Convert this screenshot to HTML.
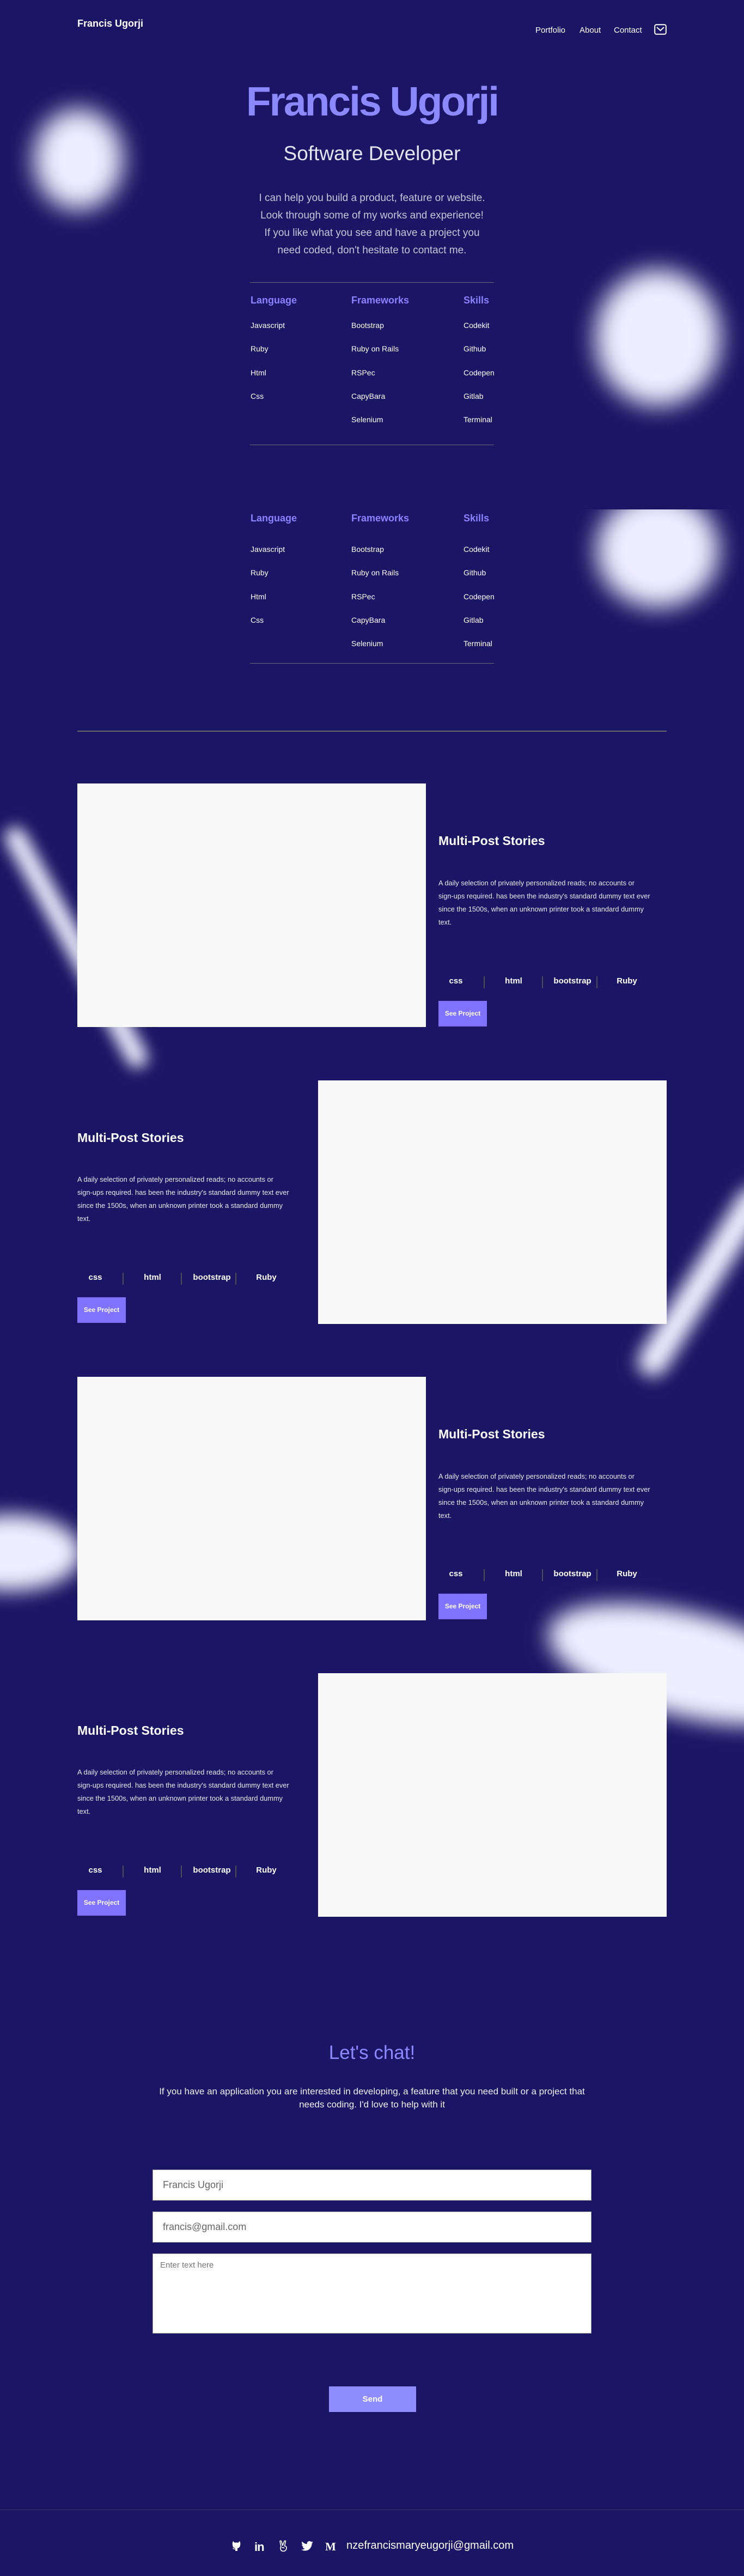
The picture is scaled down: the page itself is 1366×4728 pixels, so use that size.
<!DOCTYPE html>
<html><head><meta charset="utf-8"><style>
*{margin:0;padding:0;box-sizing:border-box}
html,body{width:1366px;height:4728px;overflow:hidden}
body{background:#1a1564;font-family:"Liberation Sans",sans-serif;color:#fff;position:relative}
.a{position:absolute}
.blur{position:absolute;background:#eeeeff;filter:blur(22px)}
.brand{left:142px;top:33px;font-size:18px;font-weight:bold}
.nav{top:47px;font-size:15px}
.title{left:0;width:1366px;top:146px;text-align:center;font-size:75px;font-weight:bold;color:#8c88ff;letter-spacing:-3px;line-height:80px}
.sub{left:0;width:1366px;top:262px;text-align:center;font-size:37px;color:#e4e4ee;line-height:40px}
.intro{left:383px;width:600px;top:348px;text-align:center;font-size:19px;line-height:32px;color:#c6c6d8;white-space:nowrap}
.hr{position:absolute;height:1px;background:#6a6670}
.ch{font-size:18px;font-weight:bold;color:#8a82ff}
.it{font-size:14px;color:#fff}
.img{position:absolute;background:#f8f8f8;width:640px;height:447px}
.pt{font-size:23px;font-weight:bold}
.pp{font-size:12.8px;line-height:24px;color:#e8e8f0;white-space:nowrap}
.tag{font-size:15px;font-weight:bold;text-align:center;width:80px}
.sep{position:absolute;width:2px;height:22px;background:#4e4c55}
.btn{position:absolute;width:89px;height:47px;background:#7f72ff;font-size:12px;font-weight:bold;text-align:center;line-height:47px}
.inp{position:absolute;left:280px;width:806px;background:#fff;border:1px solid #999;color:#666;font-size:18px}
</style></head><body>

<div class="blur" style="left:62px;top:200px;width:164px;height:185px;border-radius:50%"></div>
<div class="blur" style="left:1093px;top:495px;width:230px;height:250px;border-radius:50%"></div>
<div style="position:absolute;left:1000px;top:935px;width:366px;height:260px;overflow:hidden">
 <div class="blur" style="left:95px;top:-30px;width:225px;height:210px;border-radius:50%"></div>
</div>
<div class="blur" style="left:-110px;top:1720px;width:500px;height:38px;border-radius:20px;transform:rotate(61deg);filter:blur(14px)"></div>
<div class="blur" style="left:1090px;top:2325px;width:400px;height:55px;border-radius:28px;transform:rotate(-58deg);filter:blur(16px)"></div>
<div class="blur" style="left:-110px;top:2780px;width:260px;height:140px;border-radius:50%;filter:blur(18px)"></div>
<div class="blur" style="left:1000px;top:2960px;width:520px;height:190px;border-radius:50%;transform:rotate(14deg);filter:blur(20px)"></div>

<div class="a brand">Francis Ugorji</div>
<div class="a nav" style="left:983px">Portfolio</div>
<div class="a nav" style="left:1064px">About</div>
<div class="a nav" style="left:1127px">Contact</div>
<svg class="a" style="left:1201px;top:44px" width="23" height="20" viewBox="0 0 23 20"><rect x="1.2" y="1.2" width="20.6" height="17.6" rx="3" fill="none" stroke="#fff" stroke-width="2"/><path d="M5 6 L11.5 12 L18 6" fill="none" stroke="#fff" stroke-width="2"/></svg>

<div class="a title">Francis Ugorji</div>
<div class="a sub">Software Developer</div>
<div class="a intro">I can help you build a product, feature or website.<br>Look through some of my works and experience!<br>If you like what you see and have a project you<br>need coded, don't hesitate to contact me.</div>

<div class="hr" style="left:459px;width:448px;top:518px"></div>
<div class="a ch" style="left:460px;top:541px">Language</div>
<div class="a ch" style="left:645px;top:541px">Frameworks</div>
<div class="a ch" style="left:851px;top:541px">Skills</div>
<div class="a it" style="left:460px;top:576px;line-height:43.3px">Javascript<br>Ruby<br>Html<br>Css</div>
<div class="a it" style="left:645px;top:576px;line-height:43.3px">Bootstrap<br>Ruby on Rails<br>RSPec<br>CapyBara<br>Selenium</div>
<div class="a it" style="left:851px;top:576px;line-height:43.3px">Codekit<br>Github<br>Codepen<br>Gitlab<br>Terminal</div>
<div class="hr" style="left:459px;width:448px;top:816px"></div>

<div class="a ch" style="left:460px;top:941px">Language</div>
<div class="a ch" style="left:645px;top:941px">Frameworks</div>
<div class="a ch" style="left:851px;top:941px">Skills</div>
<div class="a it" style="left:460px;top:987px;line-height:43.3px">Javascript<br>Ruby<br>Html<br>Css</div>
<div class="a it" style="left:645px;top:987px;line-height:43.3px">Bootstrap<br>Ruby on Rails<br>RSPec<br>CapyBara<br>Selenium</div>
<div class="a it" style="left:851px;top:987px;line-height:43.3px">Codekit<br>Github<br>Codepen<br>Gitlab<br>Terminal</div>
<div class="hr" style="left:459px;width:448px;top:1217px"></div>
<div class="hr" style="left:142px;width:1082px;top:1341px;height:2px"></div>

<div class="img" style="left:142px;top:1438px"></div>
<div class="a pt" style="left:805px;top:1530px">Multi-Post Stories</div>
<div class="a pp" style="left:805px;top:1609px">A daily selection of privately personalized reads; no accounts or<br>sign-ups required. has been the industry's standard dummy text ever<br>since the 1500s, when an unknown printer took a standard dummy<br>text.</div>
<div class="a tag" style="left:797px;top:1792px">css</div><div class="sep" style="left:888px;top:1792px"></div>
<div class="a tag" style="left:903px;top:1792px">html</div><div class="sep" style="left:995px;top:1792px"></div>
<div class="a tag" style="left:1011px;top:1792px">bootstrap</div><div class="sep" style="left:1095px;top:1792px"></div>
<div class="a tag" style="left:1111px;top:1792px">Ruby</div>
<div class="btn" style="left:805px;top:1837px">See Project</div>

<div class="img" style="left:584px;top:1983px"></div>
<div class="a pt" style="left:142px;top:2075px">Multi-Post Stories</div>
<div class="a pp" style="left:142px;top:2153px">A daily selection of privately personalized reads; no accounts or<br>sign-ups required. has been the industry's standard dummy text ever<br>since the 1500s, when an unknown printer took a standard dummy<br>text.</div>
<div class="a tag" style="left:135px;top:2336px">css</div><div class="sep" style="left:225px;top:2336px"></div>
<div class="a tag" style="left:240px;top:2336px">html</div><div class="sep" style="left:332px;top:2336px"></div>
<div class="a tag" style="left:349px;top:2336px">bootstrap</div><div class="sep" style="left:432px;top:2336px"></div>
<div class="a tag" style="left:449px;top:2336px">Ruby</div>
<div class="btn" style="left:142px;top:2381px">See Project</div>

<div class="img" style="left:142px;top:2527px"></div>
<div class="a pt" style="left:805px;top:2619px">Multi-Post Stories</div>
<div class="a pp" style="left:805px;top:2698px">A daily selection of privately personalized reads; no accounts or<br>sign-ups required. has been the industry's standard dummy text ever<br>since the 1500s, when an unknown printer took a standard dummy<br>text.</div>
<div class="a tag" style="left:797px;top:2880px">css</div><div class="sep" style="left:888px;top:2880px"></div>
<div class="a tag" style="left:903px;top:2880px">html</div><div class="sep" style="left:995px;top:2880px"></div>
<div class="a tag" style="left:1011px;top:2880px">bootstrap</div><div class="sep" style="left:1095px;top:2880px"></div>
<div class="a tag" style="left:1111px;top:2880px">Ruby</div>
<div class="btn" style="left:805px;top:2925px">See Project</div>

<div class="img" style="left:584px;top:3071px"></div>
<div class="a pt" style="left:142px;top:3163px">Multi-Post Stories</div>
<div class="a pp" style="left:142px;top:3241px">A daily selection of privately personalized reads; no accounts or<br>sign-ups required. has been the industry's standard dummy text ever<br>since the 1500s, when an unknown printer took a standard dummy<br>text.</div>
<div class="a tag" style="left:135px;top:3424px">css</div><div class="sep" style="left:225px;top:3424px"></div>
<div class="a tag" style="left:240px;top:3424px">html</div><div class="sep" style="left:332px;top:3424px"></div>
<div class="a tag" style="left:349px;top:3424px">bootstrap</div><div class="sep" style="left:432px;top:3424px"></div>
<div class="a tag" style="left:449px;top:3424px">Ruby</div>
<div class="btn" style="left:142px;top:3469px">See Project</div>

<div class="a" style="left:0;width:1366px;top:3748px;text-align:center;font-size:35px;color:#8c88ff">Let's chat!</div>
<div class="a" style="left:283px;width:800px;top:3827px;text-align:center;font-size:17px;line-height:24px;color:#eeeef6">If you have an application you are interested in developing, a feature that you need built or a project that needs coding. I'd love to help with it</div>
<div class="inp" style="top:3982px;height:57px;padding:17px 0 0 18px">Francis Ugorji</div>
<div class="inp" style="top:4059px;height:57px;padding:17px 0 0 18px">francis@gmail.com</div>
<div class="inp" style="top:4136px;height:147px;padding:12px 0 0 13px;font-size:15px;color:#777">Enter text here</div>
<div class="a" style="left:604px;top:4380px;width:160px;height:47px;background:#8f8cff;text-align:center;line-height:47px;font-size:15px;font-weight:bold">Send</div>

<div class="hr" style="left:0;width:1366px;top:4606px;background:#3a3670"></div>
<svg class="a" style="left:425px;top:4663px" width="18" height="20" viewBox="0 0 18 20"><path d="M3 1 L6 4 Q9 3 12 4 L15 1 Q17 5 16 8 Q16 13 11 14 L11 19 L7 19 L7 16 Q3 17 2 13 L4 14 Q6 16 7 14 Q2 13 2 8 Q1 5 3 1Z" fill="#fff"/></svg>
<div class="a" style="left:467px;top:4662px;font-size:22px;font-weight:bold;letter-spacing:-1px">in</div>
<svg class="a" style="left:512px;top:4662px" width="17" height="22" viewBox="0 0 17 22"><path d="M4 12 L2 2 Q3 0.5 4.5 2 L7 10 L10 2 Q11.5 0.5 12.5 2 L10.5 11 Q14 11 14 14 Q14 20 8.5 20.5 Q3 20.5 3 15 Q3 12.5 4 12Z M5 14 Q8 13 10 15" fill="none" stroke="#fff" stroke-width="1.6" stroke-linejoin="round"/></svg>
<svg class="a" style="left:553px;top:4664px" width="22" height="18" viewBox="0 0 24 20"><path d="M24 2.4a10 10 0 0 1-2.8.8A5 5 0 0 0 23.3.4a10 10 0 0 1-3.1 1.2A4.9 4.9 0 0 0 11.8 6 14 14 0 0 1 1.7.9a4.9 4.9 0 0 0 1.5 6.6A4.9 4.9 0 0 1 1 6.9a4.9 4.9 0 0 0 3.9 4.8 5 5 0 0 1-2.2.1 4.9 4.9 0 0 0 4.6 3.4A9.9 9.9 0 0 1 0 17.3 14 14 0 0 0 7.5 19.5c9 0 14-7.5 14-14v-.6A10 10 0 0 0 24 2.4z" fill="#fff"/></svg>
<div class="a" style="left:597px;top:4662px;font-size:21px;font-weight:bold;font-family:'Liberation Serif',serif">M</div>
<div class="a" style="left:636px;top:4661px;font-size:20px">nzefrancismaryeugorji@gmail.com</div>
</body></html>
